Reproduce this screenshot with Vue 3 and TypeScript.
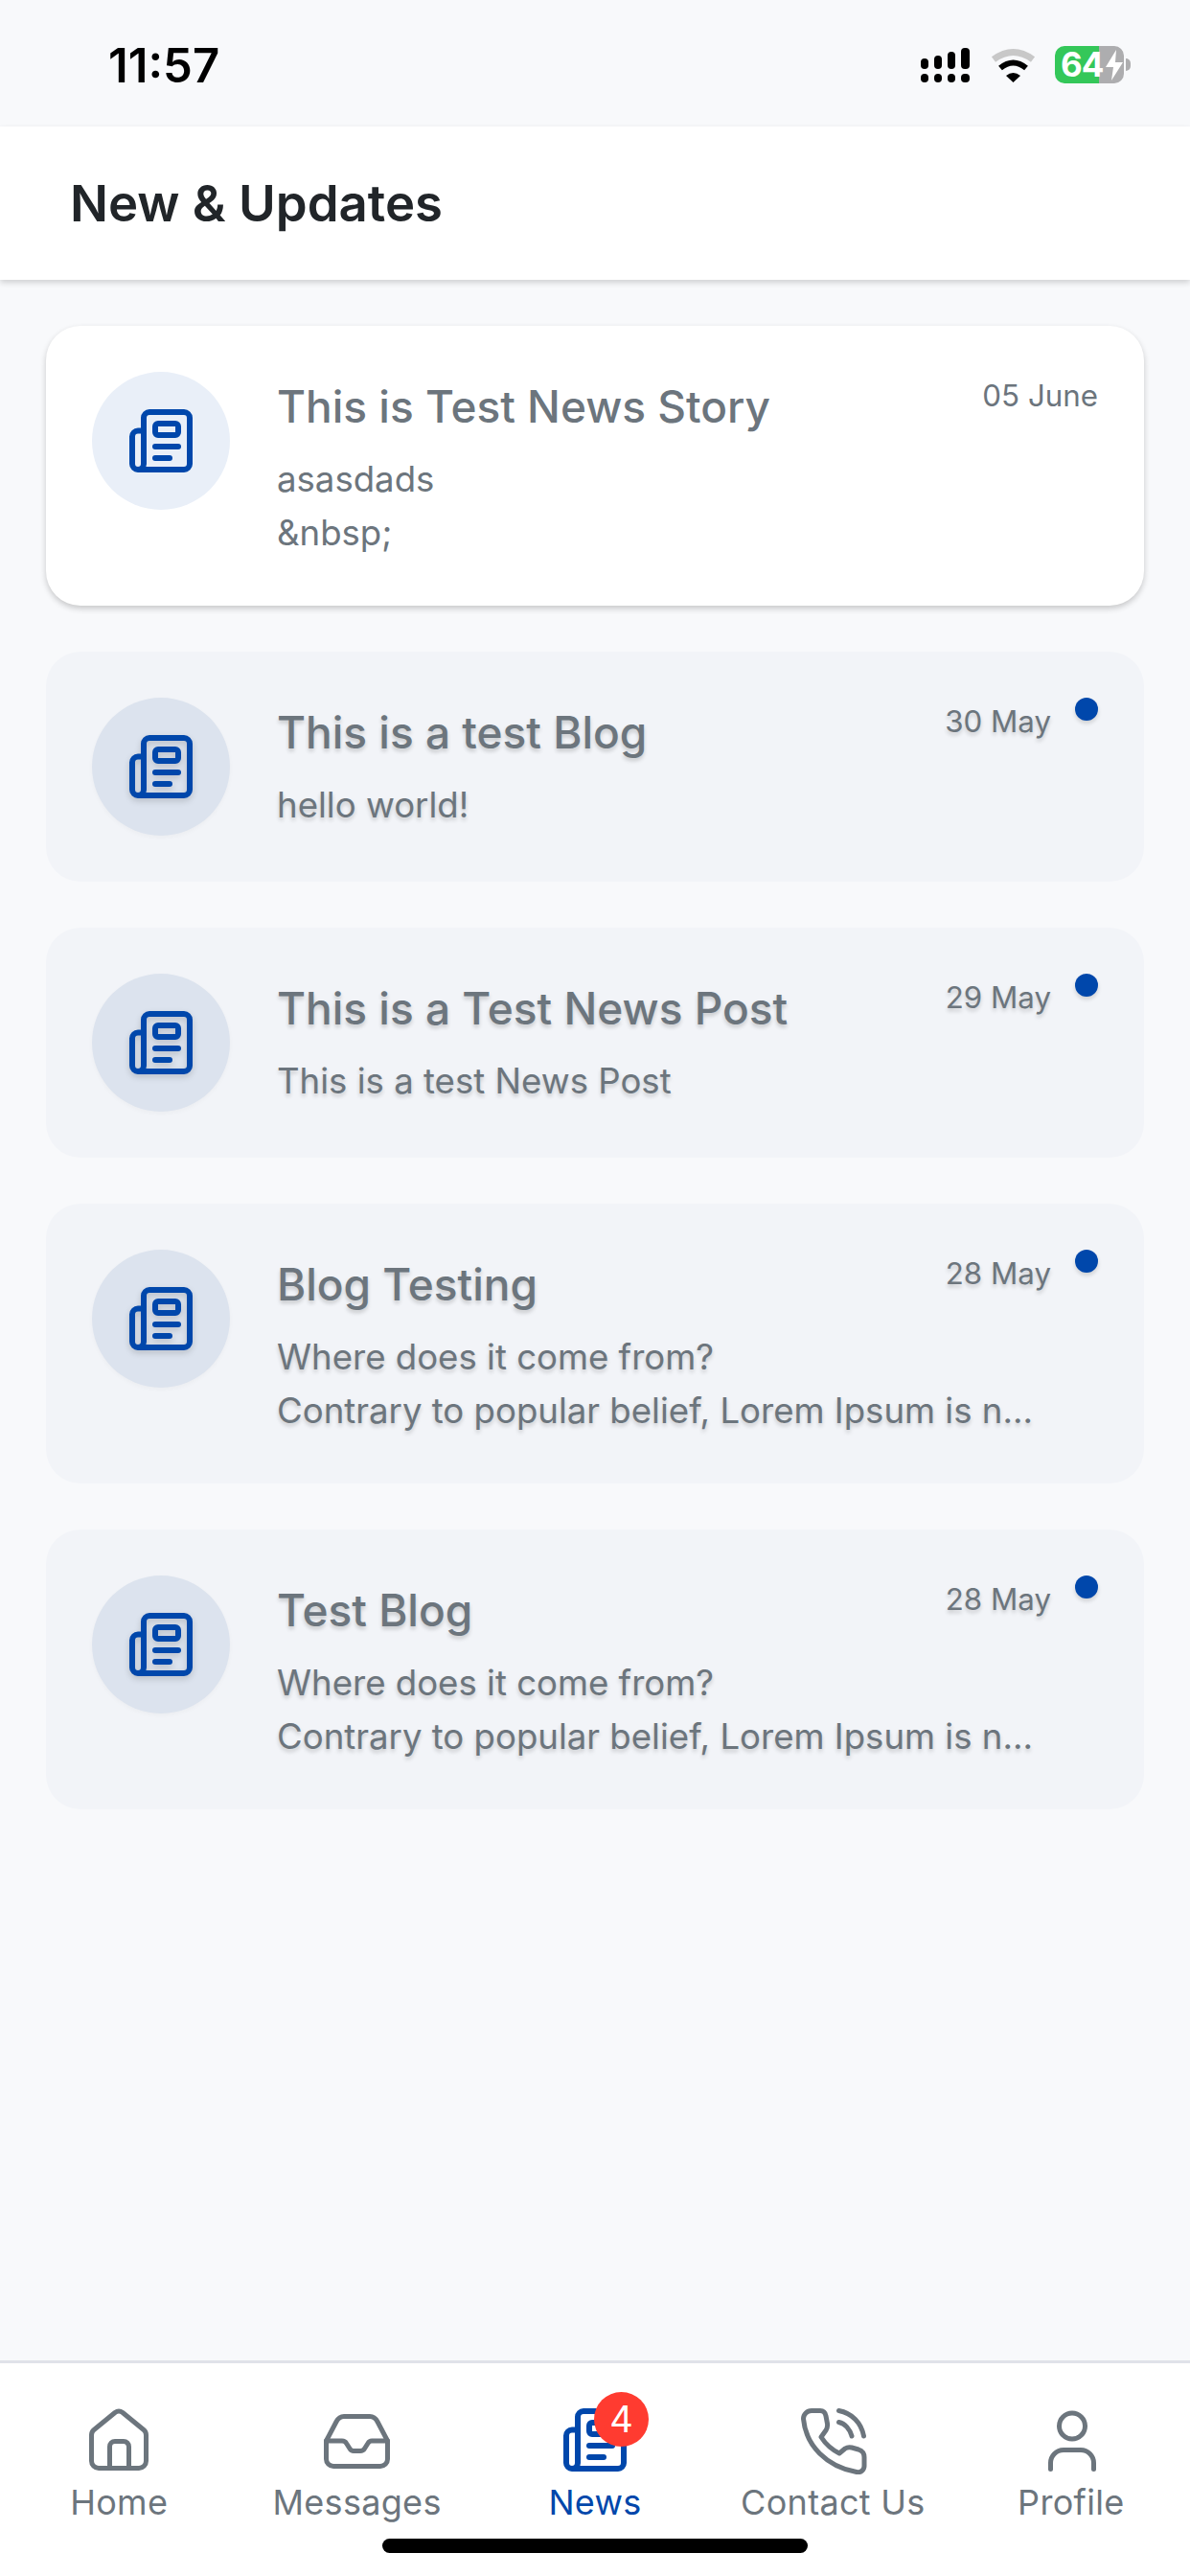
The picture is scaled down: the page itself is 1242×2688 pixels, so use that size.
<script setup lang="ts">
interface NewsItem {
  title: string;
  date: string;
  lines: string[];
  unread: boolean;
}

const lorem = "Contrary to popular belief, Lorem Ipsum is n...";

const items: NewsItem[] = [
  { title: "This is Test News Story", date: "05 June", lines: ["asasdads", "&nbsp;"], unread: false },
  { title: "This is a test Blog", date: "30 May", lines: ["hello world!"], unread: true },
  { title: "This is a Test News Post", date: "29 May", lines: ["This is a test News Post"], unread: true },
  { title: "Blog Testing", date: "28 May", lines: ["Where does it come from?", lorem], unread: true },
  { title: "Test Blog", date: "28 May", lines: ["Where does it come from?", lorem], unread: true },
];

const tabs = ["Home", "Messages", "News", "Contact Us", "Profile"];

const newsPaths = [
  "M6 8.5H4A2 2 0 0 0 2 10.5V20A2 2 0 0 0 4 22H20A2 2 0 0 0 22 20V4A2 2 0 0 0 20 2H8A2 2 0 0 0 6 4V20A2 2 0 0 1 4 22",
  "M11 6H17A1 1 0 0 1 18 7V9A1 1 0 0 1 17 10H11A1 1 0 0 1 10 9V7A1 1 0 0 1 11 6Z",
  "M10 14H18",
  "M10 18H15",
];
</script>

<template>
  <div class="page">
    <div class="status">
      <span class="time">11:57</span>
      <div class="status-icons">
        <svg class="signal" width="51" height="36" viewBox="0 0 51 36">
          <rect x="0" y="11" width="8" height="11" rx="4" />
          <rect x="14" y="8" width="8" height="14" rx="4" />
          <rect x="28" y="4" width="8" height="18" rx="4" />
          <rect x="42" y="0" width="9" height="22" rx="4" />
          <rect x="0" y="27" width="8" height="9" rx="4" />
          <rect x="14" y="27" width="8" height="9" rx="4" />
          <rect x="28" y="27" width="8" height="9" rx="4" />
          <rect x="42" y="27" width="9" height="9" rx="4" />
        </svg>
        <svg class="wifi" width="47" height="36" viewBox="0 0 47 36">
          <path d="M3 12Q23.5 -3 44 12" fill="none" stroke="#c8c8c8" stroke-width="7" />
          <path d="M10 21Q23.5 10 37 21" fill="none" stroke="#000" stroke-width="6" />
          <path d="M16 29Q23.5 23 31 29L23.5 36Z" fill="#000" />
        </svg>
        <div class="battery">
          <span class="battery-level">64</span>
          <svg width="20" height="32" viewBox="0 0 20 32">
            <path d="M12 0L1 18H9L7 32L19 13H11Z" fill="#fff" />
          </svg>
          <span class="battery-nub"></span>
        </div>
      </div>
    </div>

    <header class="header">
      <h1>New &amp; Updates</h1>
    </header>

    <main class="list">
      <article v-for="item in items" :key="item.title + item.date" class="card" :class="{ unread: item.unread }">
        <div class="avatar">
          <svg width="72" height="72" viewBox="0 0 24 24" class="stroke-blue">
            <path v-for="d in newsPaths" :key="d" :d="d" />
          </svg>
        </div>
        <div class="content">
          <div class="content-head">
            <h2>{{ item.title }}</h2>
            <span class="date">{{ item.date }}</span>
            <span v-if="item.unread" class="dot"></span>
          </div>
          <p v-for="line in item.lines" :key="line">{{ line }}</p>
        </div>
      </article>
    </main>

    <nav class="tabs">
      <div v-for="tab in tabs" :key="tab" class="tab" :class="{ active: tab === 'News' }">
        <div class="tab-icon">
          <svg v-if="tab === 'Home'" width="72" height="72" viewBox="0 0 72 72">
            <path d="M7.5 31Q7.5 27.5 10 25.5L32 7.5Q36 4.5 40 7.5L62 25.5Q64.5 27.5 64.5 31V58A7.5 7.5 0 0 1 57 65.5H15A7.5 7.5 0 0 1 7.5 58Z" />
            <path d="M26.5 65.5V43A5.5 5.5 0 0 1 32 37.5H41A5.5 5.5 0 0 1 46.5 43V65.5" />
          </svg>
          <svg v-else-if="tab === 'Messages'" width="72" height="72" viewBox="0 0 72 72">
            <path d="M3.5 37L14 17Q17 11.5 22 11.5H49Q54 11.5 57 17L67.5 37V56A7.5 7.5 0 0 1 60 63.5H11A7.5 7.5 0 0 1 3.5 56Z" />
            <path d="M3.5 37H20Q23 37 24.5 39.5L28 45Q29.5 47.5 32 47.5H39Q42 47.5 43.5 45L47 39.5Q48.5 37 51 37H67.5" />
          </svg>
          <svg v-else-if="tab === 'News'" width="72" height="72" viewBox="0 0 24 24" class="stroke-blue">
            <path v-for="d in newsPaths" :key="d" :d="d" />
          </svg>
          <svg v-else-if="tab === 'Contact Us'" width="72" height="72" viewBox="0 0 72 72">
            <path d="M5.5 14A8.5 8.5 0 0 1 14 5.5H23Q28 5.5 29 11L30.5 19Q31 23 29 26L24 33Q31 44 43 50L49 45Q52 43 56 44L63 46Q69 48 69 54V63A6.5 6.5 0 0 1 61 69.5C30 64 8 42 5.5 14Z" />
            <path d="M42.5 5.5C56 8 66 18 68.5 32" />
            <path d="M42.5 17.5C49 19 54 25 56 32" />
          </svg>
          <svg v-else width="72" height="72" viewBox="0 0 72 72">
            <circle cx="37" cy="21.5" r="13.5" />
            <path d="M14.5 66.5V60A13.5 13.5 0 0 1 28 46.5H46A13.5 13.5 0 0 1 59.5 60V66.5" />
          </svg>
          <span v-if="tab === 'News'" class="badge">4</span>
        </div>
        <span class="tab-label">{{ tab }}</span>
      </div>
      <span class="home-indicator"></span>
    </nav>
  </div>
</template>

<style scoped>
.page {
  width: 1242px;
  height: 2688px;
  display: flex;
  flex-direction: column;
  background: #f8f9fb;
  font-family: Inter, "Noto Sans", sans-serif;
  color: #6c757d;
}

.status {
  height: 132px;
  flex: none;
  display: flex;
  align-items: flex-start;
  justify-content: space-between;
  padding: 41px 69px 0 113px;
  box-sizing: border-box;
}
.time {
  font-size: 49px;
  line-height: 56px;
  font-weight: 600;
  color: #000;
}
.status-icons {
  display: flex;
  align-items: center;
  padding-top: 7px;
}
.signal {
  fill: #000;
  margin-right: 22px;
}
.wifi {
  margin-right: 20px;
}
.battery {
  position: relative;
  width: 72px;
  height: 39px;
  border-radius: 10px;
  background: linear-gradient(to right, #34c759 64%, #adadaf 64%);
  display: flex;
  align-items: center;
  padding-left: 6px;
  box-sizing: border-box;
}
.battery-level {
  font-size: 35px;
  line-height: 39px;
  font-weight: 700;
  color: #fff;
  letter-spacing: -1px;
}
.battery svg {
  margin-left: 2px;
  flex: none;
}
.battery-nub {
  position: absolute;
  right: -7px;
  top: 13px;
  width: 5px;
  height: 13px;
  border-radius: 0 6px 6px 0;
  background: #adadaf;
}

.header {
  height: 160px;
  flex: none;
  background: #fff;
  box-shadow: 0 3px 6px rgba(0, 0, 0, 0.16);
  display: flex;
  align-items: center;
  padding-left: 73px;
  position: relative;
}
.header h1 {
  margin: 0;
  font-size: 52.7px;
  font-weight: 600;
  color: #212529;
}

.list {
  flex: 1;
  display: flex;
  flex-direction: column;
  gap: 48px;
  padding: 48px;
}
.card {
  display: flex;
  gap: 49px;
  border-radius: 36px;
  padding: 48px;
  background: #fff;
  box-shadow: 0 3px 6px rgba(0, 0, 0, 0.2);
}
.card.unread {
  background: #f2f4f8;
  box-shadow: none;
}
.unread h2,
.unread .date,
.unread p {
  text-shadow: 0 3px 4px rgba(0, 0, 0, 0.18);
}
.avatar {
  width: 144px;
  height: 144px;
  flex: none;
  border-radius: 50%;
  background: #e9eff8;
  display: flex;
  align-items: center;
  justify-content: center;
}
.unread .avatar {
  background: #dce3ee;
  box-shadow: 0 2px 5px rgba(0, 0, 0, 0.03);
}
.unread .avatar svg {
  filter: drop-shadow(0 3px 3px rgba(0, 0, 0, 0.16));
}
.stroke-blue {
  fill: none;
  stroke: #0047ab;
  stroke-width: 2;
  stroke-linecap: round;
  stroke-linejoin: round;
}
.content {
  flex: 1;
  min-width: 0;
}
.content-head {
  display: flex;
  align-items: flex-start;
  height: 84px;
}
.content-head h2 {
  margin: 0;
  flex: 1;
  font-size: 46px;
  line-height: 72px;
  font-weight: 500;
}
.date {
  font-size: 31.3px;
  line-height: 50px;
}
.dot {
  width: 24px;
  height: 24px;
  border-radius: 50%;
  background: #0047ab;
  margin-left: 25px;
  box-shadow: 0 3px 4px rgba(0, 0, 0, 0.14);
}
.content p {
  margin: 0;
  font-size: 36.6px;
  line-height: 56px;
}

.tabs {
  height: 225px;
  flex: none;
  background: #fff;
  border-top: 3px solid #e0e2e9;
  box-sizing: border-box;
  display: grid;
  grid-template-columns: repeat(5, 1fr);
  padding-top: 44px;
  position: relative;
}
.tab {
  display: flex;
  flex-direction: column;
  align-items: center;
}
.tab-icon {
  position: relative;
  width: 72px;
  height: 72px;
}
.tab-icon svg {
  fill: none;
  stroke: #6c757d;
  stroke-width: 5;
  stroke-linecap: round;
  stroke-linejoin: round;
  display: block;
}
.tab-icon .stroke-blue {
  stroke: #0047ab;
  stroke-width: 2;
}
.badge {
  position: absolute;
  left: 35px;
  top: -14px;
  width: 57px;
  height: 57px;
  border-radius: 50%;
  background: #ff3b30;
  color: #fff;
  font-size: 38px;
  line-height: 57px;
  text-align: center;
}
.tab-label {
  font-size: 36px;
  line-height: 44px;
  margin-top: 7px;
  white-space: nowrap;
  letter-spacing: 0.3px;
}
.tab.active .tab-label {
  color: #0047ab;
}
.home-indicator {
  position: absolute;
  left: 399px;
  bottom: 24px;
  width: 444px;
  height: 15px;
  border-radius: 8px;
  background: #000;
}
</style>

<style>
body {
  margin: 0;
}
</style>
